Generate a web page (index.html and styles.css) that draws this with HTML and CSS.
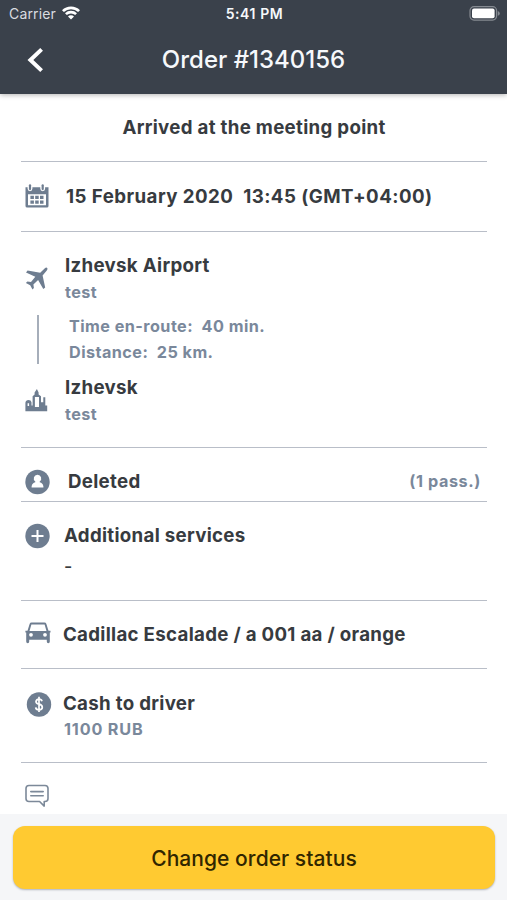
FILE: index.html
```html
<!DOCTYPE html>
<html lang="en">
<head>
<meta charset="utf-8">
<title>Order #1340156</title>
<link rel="stylesheet" href="styles.css">
</head>
<body>
<div class="screen">
  <header class="header">
    <div class="status-bar">
      <div class="carrier"><span class="carrier-name">Carrier</span>
        <svg class="wifi" viewBox="0 0 18 14"><path d="M0 4.2a12.7 12.7 0 0 1 18 0L16.1 6.1a10 10 0 0 0-14.2 0zM3 7.3a8.5 8.5 0 0 1 12 0L13.2 9.1a6 6 0 0 0-8.4 0zM6 10.4a4.2 4.2 0 0 1 6 0L9 13.6z"/></svg>
      </div>
      <span class="clock">5:41 PM</span>
      <svg class="battery" viewBox="0 0 31 15"><rect class="battery-shell" x="1" y=".7" width="26.6" height="13.4" rx="4"/><rect class="battery-level" x="3" y="2.6" width="22.6" height="9.6" rx="2"/><path class="battery-tip" d="M28.8 5q2 .8 2 2.4t-2 2.4z"/></svg>
    </div>
    <div class="nav-bar">
      <svg class="back" viewBox="0 0 18 26"><path d="M14.6 2.4 3.4 13l11.2 10.6"/></svg>
      <h1 class="title">Order #1340156</h1>
    </div>
  </header>
  <main class="content">
    <section class="row row-status"><h2 class="heading status-text">Arrived at the meeting point</h2></section>
    <section class="row row-date">
      <svg class="icon" viewBox="0 0 24 24"><path fill-rule="evenodd" d="M.5 3.200H2.600V4.800a2.400 2.400 0 0 0 4.800 0V3.200h7.900v1.600a2.400 2.400 0 0 0 4.800 0V3.200H23.500V22q0 1.600-1.600 1.600H2.100Q.5 23.600.5 22zM3 10.200v11h18v-11z"/><rect x="3.900" y=".2" width="2.200" height="6" rx="1.100"/><rect x="16.600" y=".2" width="2.200" height="6" rx="1.100"/><path d="M5.400 11.800h3.500v3.300H5.400zm4.800 0h3.500v3.300h-3.500zm4.800 0h3.500v3.300H15zM5.400 16.400h3.500v3.300H5.400zm4.800 0h3.500v3.300h-3.500zm4.800 0h3.500v3.300H15z"/></svg>
      <h2 class="heading date-text">15 February 2020&nbsp; 13:45 (GMT+04:00)</h2>
    </section>
    <section class="row-route">
      <div class="stop">
        <svg class="icon icon-plane" viewBox="0 0 24 24"><path d="M22.200 1.900q.9.900-.4 2.600l-4.200 5 2.600 12-1.900 1.500-5.200-8.900-4.700 4.400.5 3.500-1.400 1.400-2.300-4.200L.9 17l1.500-1.400 3.600.4 4.300-5.200L1 6.500l1.600-2 12.600 2.200 4.400-4.300q1.700-1.400 2.600-.5z"/></svg>
        <div><h2 class="heading">Izhevsk Airport</h2><p class="detail">test</p></div>
      </div>
      <div class="leg">
        <div class="leg-line"></div>
        <div class="leg-text"><p class="detail time">Time en-route:&nbsp; 40 min.</p><p class="detail distance">Distance:&nbsp; 25 km.</p></div>
      </div>
      <div class="stop">
        <svg class="icon icon-city" viewBox="0 0 24 24"><path fill-rule="evenodd" d="M.4 22.300V13.800Q.8 11 3.500 11q2.600 0 3 2.300v3.200h1.100V7.200l2-1.800V3.400L11.900 0l1.700 3.400v2l2.400 1.800v6.100h2.300V8.200h2v8.300h1.900v5.800zM9.900 8v9.900h4.100V8zM2.600 14.200v2.900h1.500v-2.900z"/></svg>
        <div><h2 class="heading city">Izhevsk</h2><p class="detail">test</p></div>
      </div>
    </section>
    <section class="row row-passenger">
      <svg class="icon" viewBox="0 0 24 24"><circle cx="12.500" cy="12" r="12.200"/><path class="knockout" d="M12.500 4.700a3.700 3.700 0 0 1 2.200 6.700v.9q3.200.8 3.700 4.100v1.100H6.600v-1.100q.5-3.300 3.700-4.100v-.9a3.700 3.700 0 0 1 2.200-6.700z"/></svg>
      <h2 class="heading">Deleted</h2><span class="detail passengers">(1 pass.)</span>
    </section>
    <section class="row row-services">
      <svg class="icon" viewBox="0 0 24 24"><circle cx="12.500" cy="12" r="12.200"/><path class="plus" d="M12.500 6v12M6.500 12h12"/></svg>
      <div><h2 class="heading">Additional services</h2><p class="empty">-</p></div>
    </section>
    <section class="row row-car">
      <svg class="icon icon-car" viewBox="0 0 26 22"><path fill-rule="evenodd" d="M6.600.5h12.800q1.500 0 1.900 1.300l2.200 7H25.500v1.700H24.800V19.500q0 1.700-1.500 1.700t-1.500-1.700v-1.700H4.200v1.700q0 1.700-1.500 1.700t-1.500-1.700v-9H.4V8.800H2.500l2.200-7Q5.100.5 6.600.5zM6.400 2.500 4.500 9h17l-1.900-6.500zM4.100 12.800a1.900 1.900 0 1 0 3.800 0 1.900 1.900 0 1 0-3.800 0zM18.100 12.800a1.900 1.900 0 1 0 3.800 0 1.900 1.900 0 1 0-3.800 0z"/></svg>
      <h2 class="heading">Cadillac Escalade / a 001 aa / orange</h2>
    </section>
    <section class="row row-cash">
      <svg class="icon" viewBox="0 0 24 24"><circle cx="12" cy="12.500" r="12.200"/><path class="dollar" d="M15 9.200Q14.500 7.100 12 7.100T9 9.500q0 2 3 2.700 3.300.7 3.300 3 0 2.600-3.200 2.600T8.700 15.400M12 4.800v15.300"/></svg>
      <div><h2 class="heading">Cash to driver</h2><p class="detail amount">1100 RUB</p></div>
    </section>
    <section class="row-comment">
      <svg class="icon icon-comment" viewBox="0 0 24 24"><path d="M4 1.500h16q3 0 3 3v10q0 3-3 3h-.8v4.600l-4.600-4.600H4q-3 0-3-3v-10q0-3 3-3zM5.800 7.600h12.400M5.800 11.800h12.400"/></svg>
    </section>
  </main>
  <footer class="footer"><button class="action">Change order status</button></footer>
</div>
</body>
</html>
```

FILE: styles.css
```css
* { box-sizing: border-box; }
body { margin: 0; background: #fff; font-family: Inter, "Liberation Sans", sans-serif; }
h1, h2, p { margin: 0; }
.screen { height: 900px; display: flex; flex-direction: column; overflow: hidden; }
.header { height: 94px; flex: none; background: #3a414b; color: #f6f8fb; box-shadow: 0 1px 5px rgba(0,0,0,.3); z-index: 1; }
.status-bar { height: 28px; display: grid; grid-template-columns: 1fr auto 1fr; align-items: center; padding: 0 7px 0 9px; }
.carrier { display: flex; align-items: center; gap: 6px; }
.carrier-name { font-size: 14px; line-height: 16px; letter-spacing: .15px; color: #d9dce0; }
.wifi { width: 18px; height: 14px; fill: #fff; margin-top: -2px; }
.clock { font-size: 14px; line-height: 16px; font-weight: 600; letter-spacing: .6px; }
.battery { width: 31px; height: 15px; justify-self: end; margin-top: -1px; }
.battery-shell { fill: none; stroke: #858a91; stroke-width: 1.200; }
.battery-level { fill: #fff; }
.battery-tip { fill: #858a91; }
.nav-bar { height: 64px; display: grid; grid-template-columns: 60px 1fr 60px; align-items: center; }
.back { width: 18px; height: 26px; margin-left: 27px; fill: none; stroke: #fff; stroke-width: 4; }
.title { text-align: center; font-size: 24px; font-weight: 500; line-height: 30px; letter-spacing: 0; }
.content { flex: 1; padding: 0 20px 0 21px; }
.row, .row-route { border-bottom: 1px solid #b9bec8; }
.row { display: flex; align-items: flex-start; }
.icon { width: 24px; height: 24px; margin-left: 4px; flex: none; fill: #6e7d90; overflow: visible; }
.heading { font-size: 18.700px; line-height: 26px; margin-bottom: -2px; font-weight: 650; color: #373b40; letter-spacing: .3px; }
.detail { font-size: 16.200px; line-height: 24px; font-weight: 650; color: #7a889b; letter-spacing: .45px; }
.row-status { height: 68px; padding-top: 21px; justify-content: center; }
.row-date { height: 70px; padding-top: 22px; }
.date-text { margin-left: 17px; letter-spacing: .45px; }
.row-route { height: 216px; padding-top: 21px; }
.stop { display: flex; height: 60px; }
.stop .heading { margin-left: 16px; }
.stop .detail { margin-left: 16px; margin-top: 3px; }
.icon-plane { margin-top: 13px; }
.icon-city { margin-top: 14px; }
.leg { display: flex; height: 62px; }
.leg-line { width: 2px; height: 49px; margin: 2px 30px 0 16px; background: #a6aeba; }
.leg-text .detail { line-height: 26px; }
.row-passenger { height: 54px; padding: 21px 6px 0 0; }
.row-passenger .icon, .row-services .icon { margin-top: 1px; }
.row-passenger .heading { margin-left: 19px; }
.passengers { margin-left: auto; letter-spacing: .6px; }
.row-services { height: 99px; padding-top: 21px; }
.row-services .heading { margin-left: 15px; }
.empty { margin: 10px 0 0 15px; font-size: 18px; line-height: 24px; font-weight: 500; color: #373b40; }
.row-services .heading + .empty, .row-cash .heading + .amount, .stop .heading + .detail { position: static; }
.row-services .empty { margin-top: 8px; }
.row-car { height: 68px; padding-top: 21px; }
.icon-car { width: 26px; height: 22px; }
.row-car .heading { margin-left: 12px; }
.row-cash { height: 94px; padding-top: 22px; }
.row-cash .icon { margin: 1px 0 0 6px; }
.row-cash .heading, .row-cash .detail { margin-left: 12px; }
.row-cash .amount { margin-top: 2px; margin-left: 13px; letter-spacing: .85px; }
.row-comment { height: 51px; padding-top: 21px; }
.icon-comment { fill: none; stroke: #7c8999; stroke-width: 1.600; stroke-linejoin: round; stroke-linecap: round; }
.knockout { fill: #fff; }
.plus { stroke: #fff; stroke-width: 2; }
.dollar { fill: none; stroke: #fff; stroke-width: 1.700; }
.footer { flex: none; height: 86px; padding: 12px 12px 11px 13px; background: #f5f6f8; }
.action { display: block; width: 100%; height: 63px; padding: 2px 0 0; border: 0; border-radius: 12px; background: #ffca31; box-shadow: 0 1px 2px rgba(70,80,100,.4); font-family: inherit; font-size: 21px; font-weight: 500; color: #302600; letter-spacing: .05px; }
```
